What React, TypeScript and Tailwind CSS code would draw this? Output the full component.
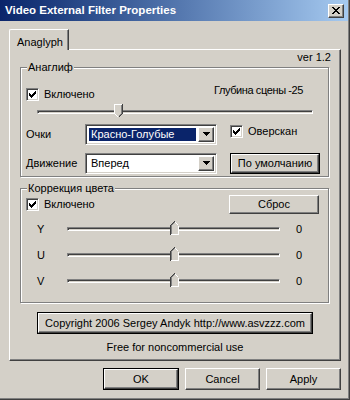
import type { ReactNode } from "react";

const raised =
  "border border-t-white border-l-white border-r-[#404040] border-b-[#404040] shadow-[inset_-1px_-1px_0_#808080] bg-[#d4d0c8]";
const sunken =
  "border border-t-[#808080] border-l-[#808080] border-r-white border-b-white shadow-[inset_1px_1px_0_#404040,inset_-1px_-1px_0_#d4d0c8]";

function Button({
  children,
  isDefault,
  className,
}: {
  children: ReactNode;
  isDefault?: boolean;
  className: string;
}) {
  if (isDefault) {
    return (
      <div className={`border border-black ${className}`}>
        <button className={`w-full h-full flex items-center justify-center ${raised}`}>{children}</button>
      </div>
    );
  }
  return <button className={`flex items-center justify-center ${raised} ${className}`}>{children}</button>;
}

function Checkbox({ label }: { label: string }) {
  return (
    <label className="flex items-center gap-[5px]">
      <span className={`w-[13px] h-[13px] bg-white flex items-center justify-center ${sunken}`}>
        <svg width="7" height="7" viewBox="0 0 7 7" shapeRendering="crispEdges">
          <path
            d="M0 2h1v3H0z M1 3h1v3H1z M2 4h1v3H2z M3 3h1v3H3z M4 2h1v3H4z M5 1h1v3H5z M6 0h1v3H6z"
            fill="#000"
          />
        </svg>
      </span>
      <span>{label}</span>
    </label>
  );
}

function Thumb({ up }: { up?: boolean }) {
  return (
    <svg width="9" height="14" viewBox="0 0 9 14" className={up ? "rotate-180" : ""} shapeRendering="crispEdges">
      <path d="M0 0H9V9.5L4.5 14L0 9.5Z" fill="#d4d0c8" />
      <path d="M0.5 9.5V0.5H8" stroke="#fff" fill="none" />
      <path d="M0.5 9.5L4.5 13.5" stroke="#fff" fill="none" />
      <path d="M7.5 1V9.5L4.5 12.5" stroke="#808080" fill="none" />
      <path d="M8.5 0V9.5L4.5 13.5" stroke="#404040" fill="none" />
    </svg>
  );
}

function Track({ width, pos, up }: { width: string; pos: number; up?: boolean }) {
  return (
    <div className={`relative h-[16px] ${width}`}>
      <div className="pt-[6px]">
        <div className="h-[4px] border border-t-[#808080] border-l-[#808080] border-r-white border-b-white shadow-[inset_1px_1px_0_#404040]" />
      </div>
      <div className="absolute top-0" style={{ left: pos }}>
        <Thumb up={up} />
      </div>
    </div>
  );
}

function Combo({ value, selected }: { value: string; selected?: boolean }) {
  return (
    <div className={`w-[132px] h-[21px] bg-white flex p-[2px] ${sunken}`}>
      <div className="flex-1 p-[1px] pr-[2px]">
        <div
          className={`h-full flex items-center pl-[2px] ${selected ? "bg-[#0a246a] text-white" : ""}`}
        >
          {value}
        </div>
      </div>
      <div className={`w-[16px] h-full flex items-center justify-center ${raised}`}>
        <svg width="7" height="4" viewBox="0 0 7 4" shapeRendering="crispEdges">
          <path d="M0 0h7v1H0z M1 1h5v1H1z M2 2h3v1H2z M3 3h1v1H3z" fill="#000" />
        </svg>
      </div>
    </div>
  );
}

function GroupBox({ title, className, children }: { title: string; className: string; children: ReactNode }) {
  return (
    <div
      className={`relative border border-[#808080] shadow-[inset_1px_1px_0_#fff,1px_1px_0_#fff] ${className}`}
    >
      <span className="absolute -top-[8px] left-[6px] px-[1px] bg-[#d4d0c8] leading-[14px]">{title}</span>
      {children}
    </div>
  );
}

export default function App() {
  const colorRows = ["Y", "U", "V"];

  return (
    <div className="w-[350px] h-[400px] bg-[#d4d0c8] flex flex-col font-['Liberation_Sans',Arial,sans-serif] text-[11px] text-black shadow-[inset_-1px_-1px_0_#404040,inset_-2px_-2px_0_#808080] overflow-hidden select-none">
      {/* title bar */}
      <div className="h-[21px] mr-[2px] flex items-center pl-[5px] pr-[4px] bg-linear-to-r from-[#0a246a] to-[#a6caf0]">
        <span className="text-white font-bold text-[11.5px]">Video External Filter Properties</span>
        <div className={`ml-auto w-[16px] h-[14px] flex items-center justify-center ${raised}`}>
          <svg width="8" height="7" viewBox="0 0 8 7" shapeRendering="crispEdges">
            <path
              d="M0 0h2v1H0z M6 0h2v1H6z M1 1h2v1H1z M5 1h2v1H5z M2 2h4v1H2z M3 3h2v1H3z M2 4h4v1H2z M1 5h2v1H1z M5 5h2v1H5z M0 6h2v1H0z M6 6h2v1H6z"
              fill="#000"
            />
          </svg>
        </div>
      </div>

      {/* tab header */}
      <div className="mt-[8px] ml-[9px] flex">
        <div className="relative z-10 -mb-px w-[60px] h-[21px] bg-[#d4d0c8] border-t border-l border-white border-r border-r-[#404040] rounded-tl-[2px] shadow-[inset_-1px_0_0_#808080] pl-[7px] pt-[4px]">
          Anaglyph
        </div>
      </div>

      {/* tab page */}
      <div className="ml-[9px] w-[332px] h-[312px] border border-t-white border-l-white border-r-[#404040] border-b-[#404040] shadow-[inset_-1px_-1px_0_#808080] flex flex-col">
        <div className="h-[14px] leading-[14px] text-right pr-[9px]">ver 1.2</div>

        <GroupBox title="Анаглиф" className="mt-[3px] ml-[10px] w-[309px] h-[110px] flex flex-col pl-[5px]">
          <div className="mt-[18px] flex items-center pr-[25px]">
            <Checkbox label="Включено" />
            <span className="ml-auto -mt-[8px] tracking-[-0.4px]">Глубина сцены -25</span>
          </div>
          <div className="mt-px ml-[11px]">
            <Track width="w-[276px]" pos={77} />
          </div>
          <div className="mt-[4px] flex items-center">
            <span className="w-[59px]">Очки</span>
            <Combo value="Красно-Голубые" selected />
            <div className="ml-[13px] -mt-[6px]">
              <Checkbox label="Оверскан" />
            </div>
          </div>
          <div className="mt-[8px] flex items-center">
            <span className="w-[59px]">Движение</span>
            <Combo value="Вперед" />
            <Button isDefault className="ml-[13px] w-[90px] h-[21px]">
              По умолчанию
            </Button>
          </div>
        </GroupBox>

        <GroupBox title="Коррекция цвета" className="mt-[11px] ml-[10px] w-[309px] h-[115px] flex flex-col pl-[5px]">
          <div className="mt-[6px] flex items-center">
            <Checkbox label="Включено" />
            <Button className="ml-auto mr-[9px] w-[90px] h-[19px]">Сброс</Button>
          </div>
          <div className="mt-[2px] flex flex-col">
            {colorRows.map((c) => (
              <div key={c} className="h-[26px] flex items-center">
                <span className="ml-[10px] w-[31px] pl-px">{c}</span>
                <Track width="w-[213px]" pos={103} up />
                <span className="ml-[16px]">0</span>
              </div>
            ))}
          </div>
        </GroupBox>

        <Button isDefault className="mt-[9px] ml-[27px] w-[276px] h-[22px]">
          Copyright 2006 Sergey Andyk http://www.asvzzz.com
        </Button>
        <div className="mt-[6px] h-[14px] leading-[14px] text-center">Free for noncommercial use</div>
      </div>

      {/* dialog buttons */}
      <div className="mt-[7px] flex justify-end gap-[6px] pr-[9px]">
        <Button isDefault className="w-[76px] h-[22px]">
          OK
        </Button>
        <Button className="w-[75px] h-[22px]">Cancel</Button>
        <Button className="w-[75px] h-[22px]">Apply</Button>
      </div>
    </div>
  );
}
